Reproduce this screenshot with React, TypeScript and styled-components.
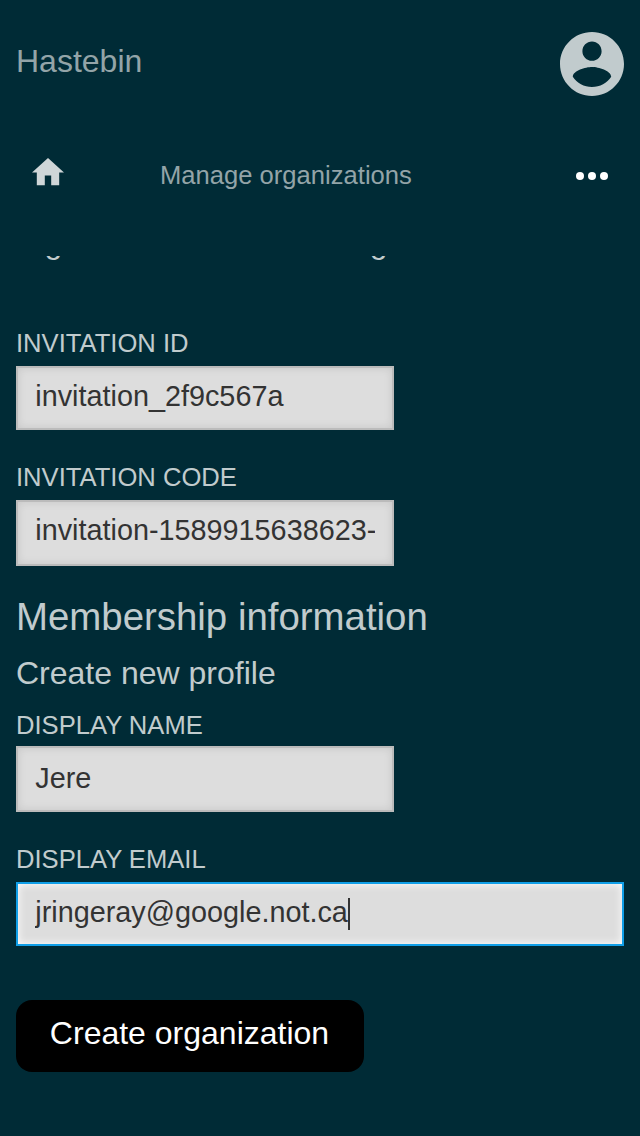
import React from "react";
import styled, { createGlobalStyle, css } from "styled-components";

const GlobalStyle = createGlobalStyle`
  * { box-sizing: border-box; }
  html, body { margin: 0; background: #002b36; }
  body { font-family: "Liberation Sans", Arial, sans-serif; color: #c1cbcd; }
`;

const Page = styled.div`
  width: 640px;
  height: 1136px;
  display: flex;
  flex-direction: column;
  overflow: hidden;
  background: #002b36;
`;

const Header = styled.header`
  flex: none;
  height: 128px;
  padding: 0 16px;
  display: flex;
  align-items: center;
  justify-content: space-between;
`;

const Brand = styled.div`
  font-size: 32px;
  line-height: 36px;
  margin-bottom: 6px;
  color: #93a4a8;
`;

const Avatar = styled.svg`
  display: block;
  width: 64px;
  height: 64px;
  fill: #c1cbcd;
`;

const Nav = styled.nav`
  flex: none;
  height: 128px;
  padding: 0 32px;
  display: grid;
  grid-template-columns: 128px 1fr auto;
  align-items: start;
`;

const HomeIcon = styled.svg`
  display: block;
  width: 32px;
  height: 27.2px;
  margin-top: 30.4px;
  fill: #cfd6d8;
`;

const NavTitle = styled.div`
  margin-top: 32px;
  font-size: 25.6px;
  line-height: 30px;
  color: #93a4a8;
`;

const Dots = styled.div`
  display: flex;
  gap: 4px;
  margin-top: 44px;
`;

const Dot = styled.span`
  width: 8px;
  height: 8px;
  border-radius: 50%;
  background: #fff;
`;

const Content = styled.main`
  flex: 1;
  min-height: 0;
  overflow: hidden;
  padding: 0 16px;
`;

const Intro = styled.p`
  margin: -32px 0 0;
  height: 105px;
  font-size: 32px;
  line-height: 36px;
  word-spacing: -0.047em;
  white-space: nowrap;
`;

const Field = styled.div<{ $gap: number }>`
  display: flex;
  flex-direction: column;
  align-items: flex-start;
  margin-bottom: ${(p) => p.$gap}px;
`;

const Label = styled.label<{ $space: number }>`
  font-size: 25.6px;
  line-height: 29px;
  margin-bottom: ${(p) => p.$space}px;
  text-transform: uppercase;
`;

const box = css<{ $height: number }>`
  height: ${(p) => p.$height}px;
  padding: 0 17.28px;
  border: 2px solid #bbb;
  border-radius: 0;
  background: #ddd;
  box-shadow: inset 0 0 8px rgba(0, 0, 0, 0.1);
  color: #333;
  font: 28.8px "Liberation Sans", Arial, sans-serif;
`;

const Input = styled.input<{ $height: number; $lift: number }>`
  ${box}
  width: 378px;
  padding-bottom: ${(p) => p.$lift}px;
  outline: none;
`;

const FocusedInput = styled.div<{ $height: number }>`
  ${box}
  width: 608px;
  display: flex;
  align-items: center;
  border-color: #109fe8;
  box-shadow: inset 0 0 8px #fff;
`;

const Typed = styled.span`
  line-height: 33px;
  margin-bottom: 3px;
  overflow: hidden;
`;

const Caret = styled.span`
  width: 2px;
  height: 32px;
  margin-left: 0.5px;
`;

const CaretBar = styled.span`
  display: block;
  width: 2px;
  height: 32px;
  background: #333;
`;

const Title = styled.h2`
  margin: 0;
  height: 60px;
  font-size: 38.4px;
  line-height: 44px;
  font-weight: 400;
`;

const Subtitle = styled.h3`
  margin: 0;
  height: 56px;
  font-size: 32px;
  line-height: 36px;
  font-weight: 400;
`;

const Submit = styled.button`
  display: block;
  width: 348px;
  height: 72px;
  padding: 0 1px 5px 0;
  border: 0;
  border-radius: 16px;
  background: #000;
  color: #fff;
  font: 32px "Liberation Sans", Arial, sans-serif;
`;

export default function App() {
  return (
    <>
      <GlobalStyle />
      <Page>
        <Header>
          <Brand>Hastebin</Brand>
          <Avatar viewBox="2 2 20 20">
            <path d="M12 2C6.48 2 2 6.48 2 12s4.48 10 10 10 10-4.48 10-10S17.52 2 12 2zm0 3c1.66 0 3 1.34 3 3s-1.34 3-3 3-3-1.34-3-3 1.34-3 3-3zm0 14.2c-2.5 0-4.71-1.28-6-3.22.03-1.99 4-3.08 6-3.08 1.99 0 5.97 1.09 6 3.08-1.29 1.94-3.5 3.22-6 3.22z" />
          </Avatar>
        </Header>
        <Nav>
          <HomeIcon viewBox="2 3 20 17">
            <path d="M10 20v-6h4v6h5v-8h3L12 3 2 12h3v8z" />
          </HomeIcon>
          <NavTitle>Manage organizations</NavTitle>
          <Dots>
            <Dot />
            <Dot />
            <Dot />
          </Dots>
        </Nav>
        <Content>
          <Intro>Sign in to create a new organization</Intro>
          <Field $gap={33}>
            <Label $space={8} htmlFor="invitation-id">Invitation ID</Label>
            <Input id="invitation-id" $height={64} $lift={4} defaultValue="invitation_2f9c567a" />
          </Field>
          <Field $gap={29}>
            <Label $space={8} htmlFor="invitation-code">Invitation code</Label>
            <Input id="invitation-code" $height={66} $lift={6} defaultValue="invitation-1589915638623-" />
          </Field>
          <Title>Membership information</Title>
          <Subtitle>Create new profile</Subtitle>
          <Field $gap={33}>
            <Label $space={6} htmlFor="display-name">Display name</Label>
            <Input id="display-name" $height={66} $lift={1} defaultValue="Jere" />
          </Field>
          <Field $gap={54}>
            <Label $space={8}>Display email</Label>
            <FocusedInput $height={64}>
              <Typed>jringeray@google.not.ca</Typed>
              <Caret>
                <CaretBar />
              </Caret>
            </FocusedInput>
          </Field>
          <Submit type="button">Create organization</Submit>
        </Content>
      </Page>
    </>
  );
}
